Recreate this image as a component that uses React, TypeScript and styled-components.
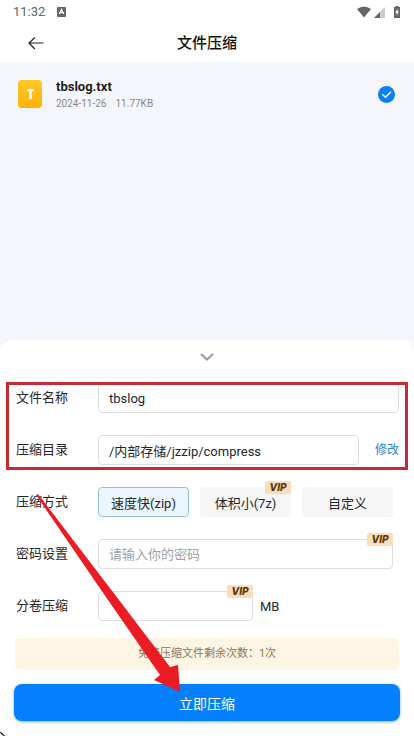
import React from "react";
import styled, { createGlobalStyle, css } from "styled-components";

const GlobalStyle = createGlobalStyle`
  *, *::before, *::after { box-sizing: border-box; }
  body { margin: 0; background: #fff; }
  body, button, input { font-family: Roboto, "Noto Sans CJK SC", sans-serif; }
`;

const Page = styled.div`
  display: flex;
  flex-direction: column;
  min-height: 100vh;
  background: #f4f6fb;
  color: #24262b;
  overflow: hidden;
`;

const StatusBar = styled.div`
  display: flex;
  align-items: center;
  height: 24px;
  padding: 0 12px 0 13px;
  gap: 12px;
  background: #fff;
  color: #666;
  font-size: 13px;
  line-height: 24px;
`;

const StatusIcons = styled.div`
  display: flex;
  align-items: center;
  gap: 3px;
  margin-left: auto;
`;

const Header = styled.header`
  display: grid;
  grid-template-columns: 48px 1fr 48px;
  align-items: center;
  height: 38px;
  padding: 0 12px;
  background: #fff;
`;

const IconButton = styled.button`
  display: flex;
  align-items: center;
  justify-content: center;
  padding: 0;
  border: 0;
  background: none;
  cursor: pointer;
`;

const Title = styled.h1`
  margin: 0;
  color: #111;
  font-size: 15px;
  font-weight: 500;
  line-height: 20px;
  text-align: center;
`;

const FileList = styled.main`
  flex: 1;
`;

const FileRow = styled.label`
  display: flex;
  align-items: center;
  gap: 14px;
  height: 64px;
  padding: 0 19px 0 18px;
`;

const FileInfo = styled.div`
  flex: 1;
  padding-top: 2px;
`;

const FileName = styled.div`
  color: #1c1d20;
  font-size: 13px;
  font-weight: 700;
  line-height: 18px;
`;

const FileMeta = styled.div`
  display: flex;
  gap: 9px;
  color: #85878c;
  font-size: 10px;
  line-height: 16px;
`;

const RoundCheck = styled.input`
  appearance: none;
  width: 17px;
  height: 17px;
  margin: 0;
  border: 1px solid #b8bcc4;
  border-radius: 50%;

  &:checked {
    border: 0;
    background: #0a80f5
      url("data:image/svg+xml,%3Csvg xmlns='http://www.w3.org/2000/svg' viewBox='0 0 17 17'%3E%3Cpath d='M4.8 8.7l2.7 2.5 5-5' fill='none' stroke='white' stroke-width='1.5' stroke-linecap='round' stroke-linejoin='round'/%3E%3C/svg%3E");
  }
`;

const Sheet = styled.form`
  position: relative;
  padding-bottom: 15px;
  border-radius: 12px 12px 0 0;
  background: #fff;
`;

const Collapse = styled(IconButton)`
  width: 100%;
  height: 34px;
`;

const Fields = styled.div`
  display: flex;
  flex-direction: column;
  gap: 22px;
  padding-top: 9px;
`;

const Highlight = styled.div`
  position: absolute;
  top: 42px;
  left: 6px;
  right: 6px;
  height: 88px;
  border: 3px solid #c42b32;
  pointer-events: none;
`;

const Row = styled.div<{ $wide?: boolean }>`
  display: flex;
  align-items: center;
  height: 30px;
  padding: 0 ${(p) => (p.$wide ? 15 : 21)}px 0 16px;
`;

const Label = styled.label`
  width: 82px;
  flex: none;
  font-size: 13px;
  line-height: 20px;
`;

const InputWrap = styled.div<{ $width?: number }>`
  position: relative;
  flex: ${(p) => (p.$width ? `0 0 ${p.$width}px` : "1")};
  min-width: 0;
  height: 30px;
`;

const TextInput = styled.input`
  display: block;
  width: 100%;
  height: 30px;
  padding: 0 10px;
  border: 1px solid #dcdde0;
  border-radius: 4px;
  background: #fff;
  color: #24262b;
  font-size: 13px;
  outline: none;

  &::placeholder { color: #a0a1a5; opacity: 1; }
`;

const ChangeLink = styled.a`
  margin-left: 16px;
  color: #2385cc;
  font-size: 12px;
  line-height: 20px;
  text-decoration: none;
`;

const Unit = styled.span`
  margin-left: 7px;
  font-size: 13px;
`;

const Options = styled.div`
  display: grid;
  flex: 1;
  grid-template-columns: repeat(3, 1fr);
  gap: 11px;
`;

const Option = styled.button<{ $active?: boolean }>`
  position: relative;
  height: 30px;
  padding: 0;
  border: 0;
  border-radius: 4px;
  background: #f6f6f7;
  color: #24262b;
  font-size: 13px;
  cursor: pointer;
  ${(p) => p.$active && css`
    border: 1px solid #8fbfe0;
    background: #edf6ff;
  `}
`;

const VipBadge = styled.span`
  position: absolute;
  top: -6px;
  right: 0;
  width: 26px;
  height: 13px;
  border-radius: 2px;
  background: #fcdcb9;
  color: #5b360d;
  font: italic 800 10px/13px Inter, sans-serif;
  text-align: center;
`;

const Notice = styled.p`
  margin: 17px 15px 14px;
  border-radius: 5px;
  background: #fff5e4;
  color: #8d7355;
  font-size: 11px;
  line-height: 32px;
  text-align: center;
`;

const Submit = styled.button`
  display: block;
  width: calc(100% - 28px);
  height: 37px;
  margin: 0 14px;
  padding: 0;
  border: 0;
  border-radius: 8px;
  background: #0480ff;
  box-shadow: 0 1px 3px rgba(30, 90, 150, 0.5);
  color: #fff;
  font-size: 14px;
  cursor: pointer;
`;

const Pointer = styled.svg`
  position: absolute;
  bottom: 42px;
  left: 36px;
  pointer-events: none;
`;

const CornerMark = styled.svg`
  position: absolute;
  bottom: 0;
  left: 0;
`;

const methods = [
  { name: "速度快(zip)", active: true },
  { name: "体积小(7z)", vip: true },
  { name: "自定义" },
];

export default function App() {
  return (
    <>
      <GlobalStyle />
      <Page>
        <StatusBar>
          <span>11:32</span>
          <svg width="9" height="10" viewBox="0 0 9 10" aria-hidden="true">
            <rect width="9" height="10" rx="1" fill="#666" />
            <path d="M2.2 7L4.5 2.4 6.8 7M3.2 5.6h2.6" fill="none" stroke="#fff" strokeWidth="1.2" />
          </svg>
          <StatusIcons aria-hidden="true">
            <svg width="14" height="12" viewBox="0 0 14 12">
              <path d="M0 3Q7-2 14 3L7 11.5z" fill="#666" />
            </svg>
            <svg width="11" height="11" viewBox="0 0 11 11">
              <path d="M0 11L11 0V11z" fill="#ccc" />
              <path d="M0 11L6 5V11z" fill="#666" />
            </svg>
            <svg width="14" height="12" viewBox="0 0 14 12">
              <path d="M6 1h1.5V0h3v1H12v11H6z" fill="#666" />
              <path d="M9.6 2.5L7.3 6.8h1.4v3l2.2-4.3H9.6z" fill="#fff" />
            </svg>
          </StatusIcons>
        </StatusBar>
        <Header>
          <IconButton type="button" aria-label="返回">
            <svg width="16" height="13" viewBox="0 0 16 13" fill="none" stroke="#222" strokeWidth="1.2">
              <path d="M15.5 6H1M6.8.5L1 6l5.8 6" />
            </svg>
          </IconButton>
          <Title>文件压缩</Title>
        </Header>
        <FileList>
          <FileRow>
            <svg width="24" height="28" viewBox="0 0 24 28" aria-hidden="true">
              <defs>
                <linearGradient id="file" x1="0" y1="0" x2="0" y2="1">
                  <stop stopColor="#ffc928" />
                  <stop offset="1" stopColor="#ffb106" />
                </linearGradient>
              </defs>
              <rect width="24" height="28" rx="4" fill="url(#file)" />
              <path d="M9 10.2h7M12.5 10.2v8.8" stroke="#fff" strokeWidth="2.4" />
            </svg>
            <FileInfo>
              <FileName>tbslog.txt</FileName>
              <FileMeta>
                <span>2024-11-26</span>
                <span>11.77KB</span>
              </FileMeta>
            </FileInfo>
            <RoundCheck type="checkbox" defaultChecked aria-label="tbslog.txt" />
          </FileRow>
        </FileList>
        <Sheet onSubmit={(e) => e.preventDefault()}>
          <Collapse type="button" aria-label="收起">
            <svg width="14" height="8" viewBox="0 0 14 8" fill="none" stroke="#999a9d" strokeWidth="2.2">
              <path d="M1 1l6 5.5L13 1" />
            </svg>
          </Collapse>
          <Fields>
            <Row $wide>
              <Label htmlFor="name">文件名称</Label>
              <InputWrap>
                <TextInput id="name" defaultValue="tbslog" />
              </InputWrap>
            </Row>
            <Row $wide>
              <Label htmlFor="folder">压缩目录</Label>
              <InputWrap>
                <TextInput id="folder" defaultValue="/内部存储/jzzip/compress" />
              </InputWrap>
              <ChangeLink href="#folder">修改</ChangeLink>
            </Row>
            <Row>
              <Label as="span" id="method">压缩方式</Label>
              <Options role="group" aria-labelledby="method">
                {methods.map((m) => (
                  <Option key={m.name} type="button" $active={m.active} aria-pressed={!!m.active}>
                    {m.name}
                    {m.vip && <VipBadge>VIP</VipBadge>}
                  </Option>
                ))}
              </Options>
            </Row>
            <Row>
              <Label htmlFor="password">密码设置</Label>
              <InputWrap>
                <TextInput id="password" type="password" placeholder="请输入你的密码" />
                <VipBadge>VIP</VipBadge>
              </InputWrap>
            </Row>
            <Row>
              <Label htmlFor="volume">分卷压缩</Label>
              <InputWrap $width={155}>
                <TextInput id="volume" inputMode="numeric" />
                <VipBadge>VIP</VipBadge>
              </InputWrap>
              <Unit>MB</Unit>
            </Row>
          </Fields>
          <Notice>免费压缩文件剩余次数：1次</Notice>
          <Submit type="submit">立即压缩</Submit>
          <Highlight />
          <Pointer width="146" height="200" viewBox="0 0 146 200" aria-hidden="true">
            <path d="M0 1L2 0 83 106 134 173 142 171 144 198 118 186 124 181 72 106z" fill="#ec1c24" />
          </Pointer>
          <CornerMark width="5" height="4" viewBox="0 0 5 4" aria-hidden="true">
            <path d="M0 0L4.5 4" stroke="#111" strokeWidth="1.2" />
          </CornerMark>
        </Sheet>
      </Page>
    </>
  );
}
